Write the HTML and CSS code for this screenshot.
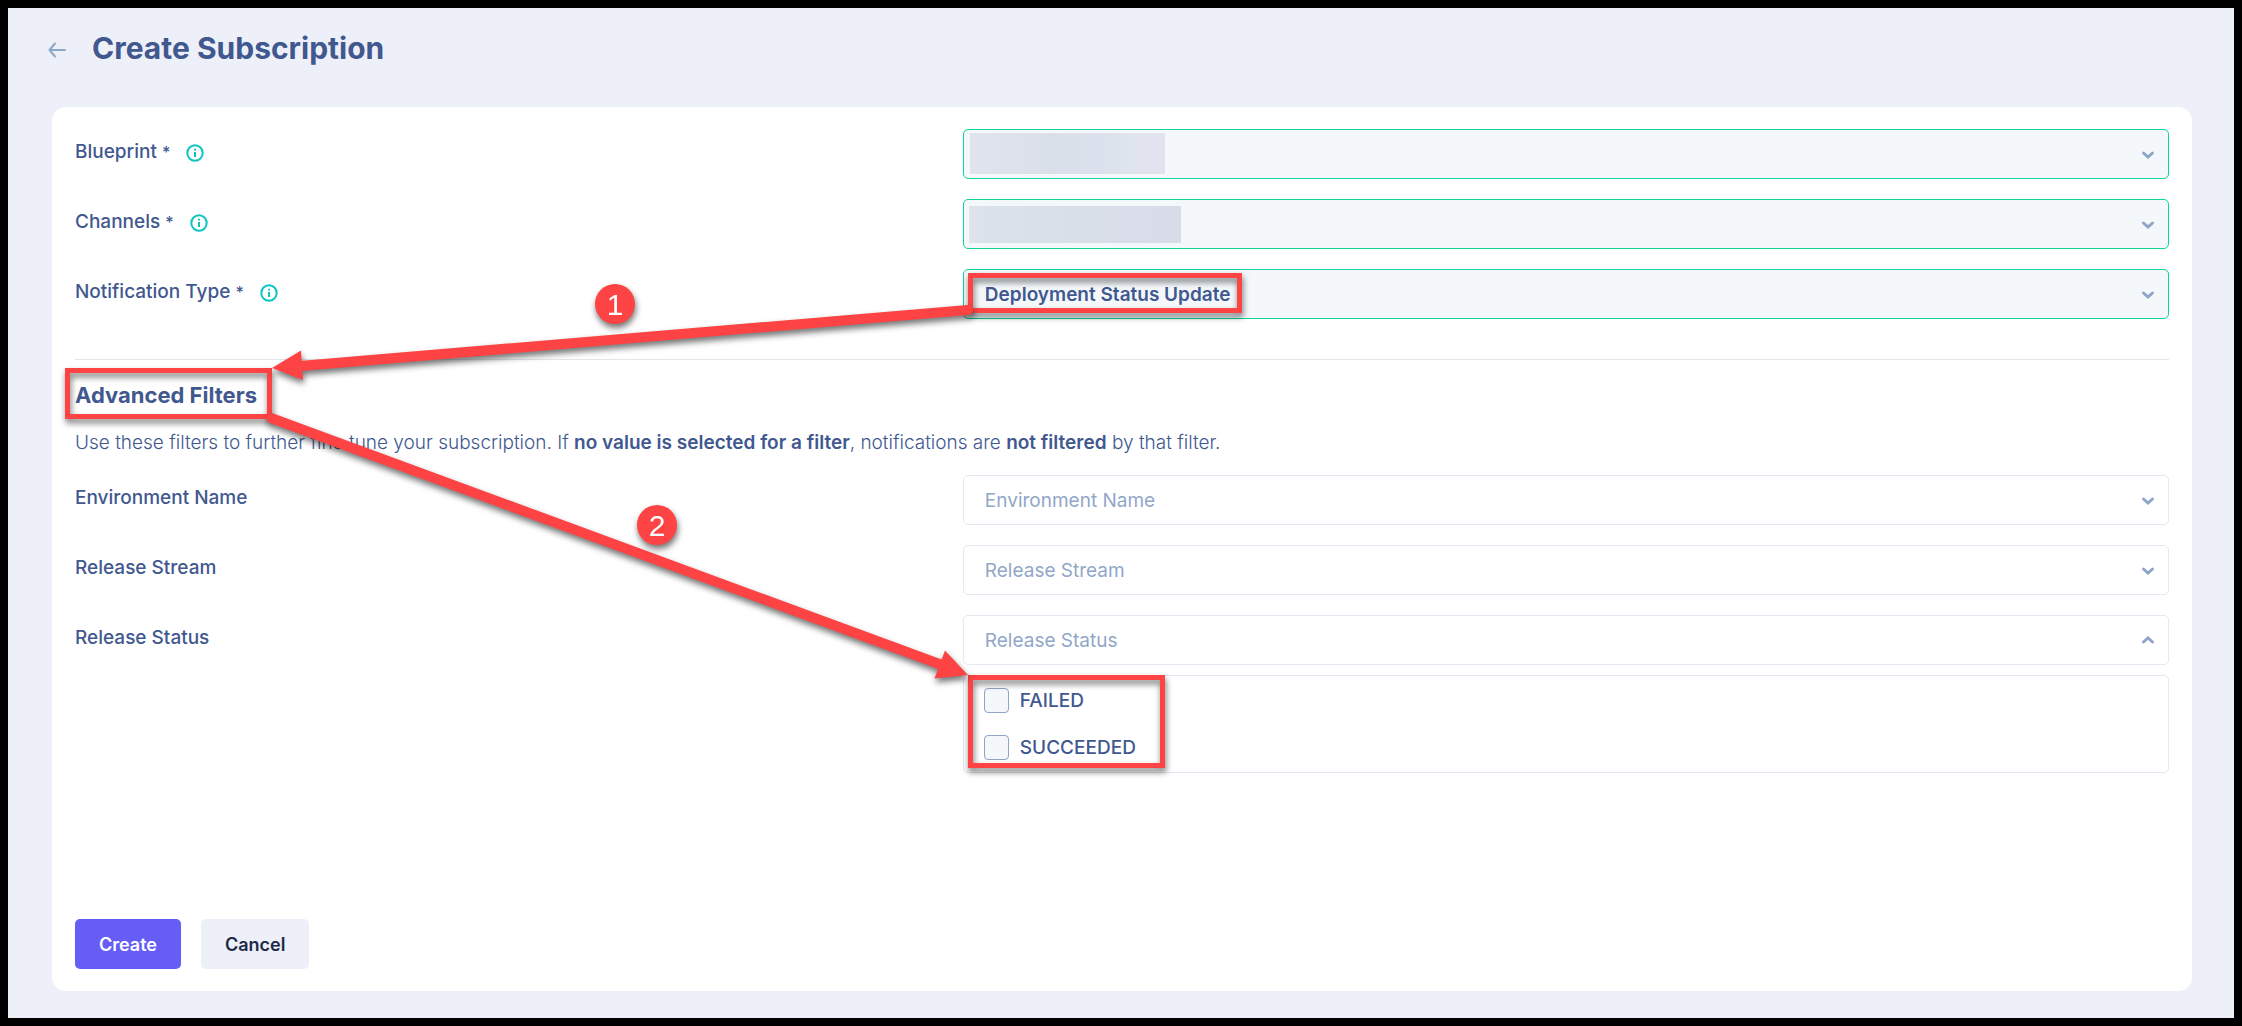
FILE: index.html
```html
<!DOCTYPE html>
<html lang="en">
<head>
    <meta charset="UTF-8">
    <meta name="viewport" content="width=device-width, initial-scale=1.0">
    <title>Create Subscription</title>
    <link rel="stylesheet" href="styles.css">
</head>
<body>
    <header class="page-header">
        <a href="#" class="back" aria-label="Back">
            <svg width="18" height="16" viewBox="0 0 18 16"><path d="M17 8H1.5M7 1.5L1.5 8L7 14.5"/></svg>
        </a>
        <h1>Create Subscription</h1>
    </header>

    <form class="card">
        <div class="row">
            <div class="label">
                <label for="blueprint">Blueprint <span class="req">*</span></label>
                <button type="button" class="info" aria-label="About blueprint">
                    <svg width="18" height="18" viewBox="0 0 18 18"><circle cx="9" cy="9" r="7.7"/><path d="M9 8v5M9 4.8v1.6"/></svg>
                </button>
            </div>
            <div class="field filled">
                <select id="blueprint"><option></option></select>
                <span class="redacted redacted-blueprint"></span>
                <svg class="chevron" width="14" height="10" viewBox="0 0 14 10"><path d="M2.5 3L7 7L11.5 3"/></svg>
            </div>
        </div>

        <div class="row">
            <div class="label">
                <label for="channels">Channels <span class="req">*</span></label>
                <button type="button" class="info" aria-label="About channels">
                    <svg width="18" height="18" viewBox="0 0 18 18"><circle cx="9" cy="9" r="7.7"/><path d="M9 8v5M9 4.8v1.6"/></svg>
                </button>
            </div>
            <div class="field filled">
                <select id="channels"><option></option></select>
                <span class="redacted redacted-channels"></span>
                <svg class="chevron" width="14" height="10" viewBox="0 0 14 10"><path d="M2.5 3L7 7L11.5 3"/></svg>
            </div>
        </div>

        <div class="row">
            <div class="label">
                <label for="type">Notification Type <span class="req">*</span></label>
                <button type="button" class="info" aria-label="About notification type">
                    <svg width="18" height="18" viewBox="0 0 18 18"><circle cx="9" cy="9" r="7.7"/><path d="M9 8v5M9 4.8v1.6"/></svg>
                </button>
            </div>
            <div class="field filled">
                <select id="type"><option>Deployment Status Update</option></select>
                <svg class="chevron" width="14" height="10" viewBox="0 0 14 10"><path d="M2.5 3L7 7L11.5 3"/></svg>
            </div>
        </div>

        <section class="filters">
            <h2>Advanced Filters</h2>
            <p>Use these filters to further fine tune your subscription. If <b>no value is selected for a filter</b>, notifications are <b>not filtered</b> by that filter.</p>

            <div class="row">
                <div class="label"><label for="environment">Environment Name</label></div>
                <div class="field">
                    <select id="environment"><option>Environment Name</option></select>
                    <svg class="chevron" width="14" height="10" viewBox="0 0 14 10"><path d="M2.5 3L7 7L11.5 3"/></svg>
                </div>
            </div>

            <div class="row">
                <div class="label"><label for="stream">Release Stream</label></div>
                <div class="field">
                    <select id="stream"><option>Release Stream</option></select>
                    <svg class="chevron" width="14" height="10" viewBox="0 0 14 10"><path d="M2.5 3L7 7L11.5 3"/></svg>
                </div>
            </div>

            <div class="row">
                <div class="label"><label for="status">Release Status</label></div>
                <div>
                    <div class="field">
                        <select id="status"><option>Release Status</option></select>
                        <svg class="chevron" width="14" height="10" viewBox="0 0 14 10"><path d="M2.5 6L7 2L11.5 6"/></svg>
                    </div>
                    <div class="options">
                        <label><input type="checkbox" name="failed"> FAILED</label>
                        <label><input type="checkbox" name="succeeded"> SUCCEEDED</label>
                    </div>
                </div>
            </div>
        </section>

        <div class="actions">
            <button type="submit" class="btn primary">Create</button>
            <button type="button" class="btn">Cancel</button>
        </div>
    </form>

    <!-- callouts drawn over the form -->
    <svg class="callouts" width="1260" height="800" viewBox="0 0 1260 800">
        <g class="outline">
            <rect x="67.5" y="370.5" width="202" height="46"/>
            <rect x="970.5" y="275.5" width="269" height="35"/>
            <rect x="970.5" y="677.5" width="192" height="88"/>
        </g>
        <g class="arrow">
            <path class="line" d="M968 310L300 366"/>
            <path d="M272 368L301 350.5L303 380Z"/>
        </g>
        <g class="arrow">
            <path class="line" d="M271 418L942 665"/>
            <path d="M968 675L945 650.5L934.5 678.5Z"/>
        </g>
        <g class="badge">
            <circle cx="615" cy="304" r="20"/>
            <text x="615" y="315">1</text>
        </g>
        <g class="badge">
            <circle cx="657" cy="525" r="20"/>
            <text x="657" y="536">2</text>
        </g>
    </svg>
</body>
</html>
```

FILE: styles.css
```css
* {
    box-sizing: border-box;
}
body {
    position: relative;
    display: flex;
    flex-direction: column;
    min-height: 100vh;
    margin: 0;
    padding: 20px 42px 27px 44px;
    border: 8px solid #000;
    background: #edf0f8;
    color: #41588f;
    font-family: Inter, "Liberation Sans", sans-serif;
    font-size: 19px;
}
.page-header {
    display: flex;
    align-items: center;
    gap: 26px;
    height: 40px;
    margin: 0 0 39px -4px;
}
.back {
    display: flex;
    padding-top: 4px;
}
.back svg {
    fill: none;
    stroke: #8fa7c7;
    stroke-width: 2;
    stroke-linecap: round;
    stroke-linejoin: round;
}
h1 {
    margin: 0;
    font-size: 30px;
    font-weight: 700;
}
.card {
    flex: 1;
    display: flex;
    flex-direction: column;
    padding: 22px 23px;
    border-radius: 14px;
    background: #fff;
}
.row {
    display: grid;
    grid-template-columns: 42.4% 1fr;
    margin-bottom: 20px;
}
.label {
    display: flex;
    align-items: center;
    gap: 16px;
    height: 45px;
    font-weight: 500;
}
.req {
    font-size: 16px;
}
.info {
    display: flex;
    padding: 3px 0 0;
    border: 0;
    background: none;
}
.info svg {
    fill: none;
    stroke: #0cc5c0;
    stroke-width: 2;
}
.field {
    position: relative;
    height: 50px;
}
.field select {
    appearance: none;
    width: 100%;
    height: 50px;
    padding: 0 40px 0 21px;
    border: 1px solid #e3e8f3;
    border-radius: 5px;
    background: #fff;
    color: #91a7c8;
    font: inherit;
}
.field.filled select {
    border-color: #0dd498;
    background: #f4f8fb;
    color: #41588f;
    font-weight: 600;
}
.chevron {
    position: absolute;
    top: 21px;
    right: 14px;
    pointer-events: none;
    fill: none;
    stroke: #8fa5c8;
    stroke-width: 3;
    stroke-linecap: round;
}
/* masked values */
.redacted {
    position: absolute;
    pointer-events: none;
}
.redacted-blueprint {
    top: 4px;
    left: 7px;
    width: 195px;
    height: 41px;
    background: linear-gradient(90deg, #e1e4ee, #dae0ea 40%, #dbe1ec 65%, #dee5ed 83%, #e1e4ee 86%);
}
.redacted-channels {
    top: 7px;
    left: 6px;
    width: 212px;
    height: 37px;
    background: linear-gradient(90deg, #dfe3ec, #dae2ec 8%, #d9dfe9 50%, #d7dce9);
}
.filters {
    margin-top: 20px;
    border-top: 1px solid #e3e5e8;
}
h2 {
    margin: 20px 0 21px;
    font-size: 22px;
    line-height: 30px;
    font-weight: 700;
}
.filters p {
    margin: 0 0 20px;
    line-height: 24px;
    font-weight: 300;
}
.filters b {
    font-weight: 600;
}
.options {
    display: flex;
    flex-direction: column;
    gap: 22px;
    margin-top: 10px;
    padding: 12px 20px;
    border: 1px solid #e3e8f3;
    border-radius: 5px;
}
.options label {
    display: flex;
    align-items: center;
    gap: 11px;
    line-height: 24px;
    font-weight: 500;
}
.options input {
    appearance: none;
    width: 25px;
    height: 25px;
    margin: 0;
    border: 1px solid #8fa5c4;
    border-radius: 4px;
    background: #f5f8fa;
}
.actions {
    display: flex;
    gap: 20px;
    margin-top: auto;
}
.btn {
    height: 50px;
    padding: 0 24px;
    border: 0;
    border-radius: 5px;
    background: #edf0f8;
    color: #20294a;
    font: inherit;
    font-size: 18px;
    font-weight: 600;
}
.btn.primary {
    background: #655df6;
    color: #fff;
}
.callouts {
    position: absolute;
    top: -8px;
    left: -8px;
    pointer-events: none;
}
.outline,
.arrow,
.badge {
    fill: #fd4343;
    filter: drop-shadow(1px 4px 3px rgba(0, 0, 0, 0.55));
}
.outline {
    fill: none;
    stroke: #fd4343;
    stroke-width: 5;
}
.line {
    stroke: #fd4343;
    stroke-width: 10;
    stroke-linecap: round;
}
.badge text {
    fill: #fff;
    font-family: "Liberation Sans", sans-serif;
    font-size: 30px;
    text-anchor: middle;
}
```
